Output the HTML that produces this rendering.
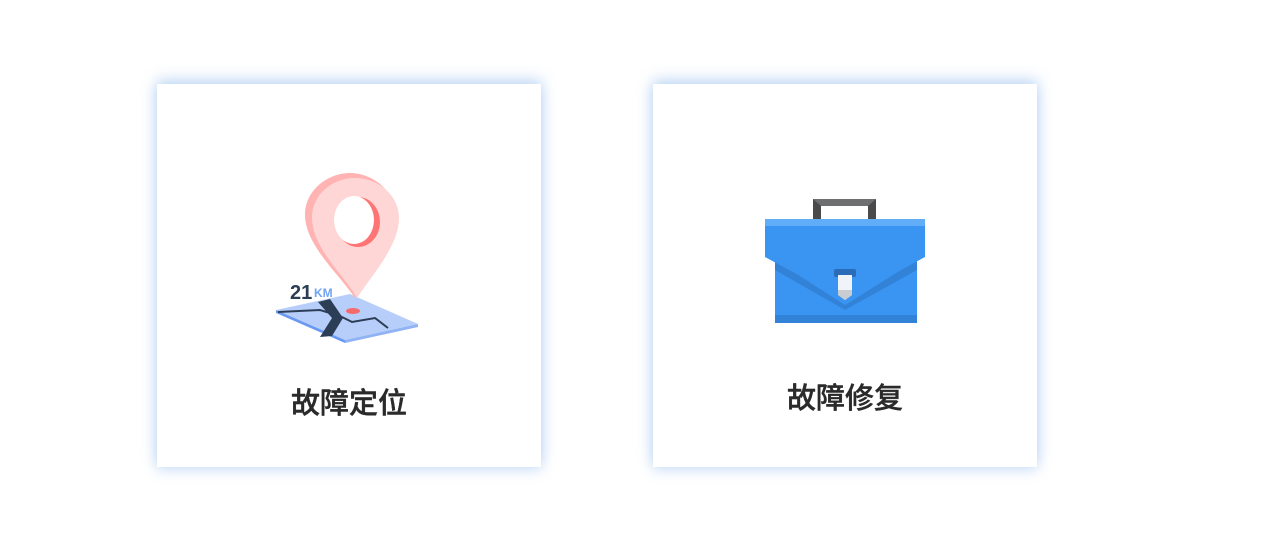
<!DOCTYPE html>
<html><head><meta charset="utf-8"><style>
body{margin:0;width:1268px;height:558px;background:#fff;position:relative;overflow:hidden;font-family:"Liberation Sans","Noto Sans CJK SC",sans-serif}
.card{position:absolute;top:84px;width:384px;height:383px;background:#fff;box-shadow:0 -4px 14px rgba(120,170,235,.45),0 4px 12px rgba(150,190,240,.3)}
.t{position:absolute;left:0;width:100%;text-align:center;font-size:29px;font-weight:500;color:#2a2a2a;-webkit-text-stroke:0.4px #2a2a2a}
svg{position:absolute;left:0;top:0}
</style></head><body>
<div class="card" style="left:157px">
<svg width="384" height="383" viewBox="157 84 384 383">
<polygon points="276,310 350,294 418,324 345,340" fill="#b8cefa"/>
<polygon points="276,310 345,340 345,343 276,313" fill="#6a9af0"/>
<polygon points="345,340 418,324 418,327 345,343" fill="#8fb3f5"/>
<polyline points="278,312 320,310 340,316 352,322 375,318 388,328" fill="none" stroke="#2c3e55" stroke-width="2"/>
<polygon points="318,302 330,299 343,318 332,336 320,337 332,318" fill="#2c3e55"/>
<ellipse cx="353" cy="311" rx="7" ry="3" fill="#f46b6b"/>
<path d="M350,173 C328,173 305,190 305,215 C305,245 340,275 355,298 C370,275 395,245 395,215 C395,190 372,173 350,173Z" fill="#ffb3b3"/>
<path d="M355,178 C333,178 312,194 312,218 C312,248 345,276 357,298 C372,275 399,246 399,218 C399,194 377,178 355,178Z" fill="#ffd6d6"/>
<ellipse cx="358" cy="222" rx="22" ry="25" fill="#ff7474"/>
<ellipse cx="354" cy="220" rx="20" ry="24" fill="#fff"/>
<text x="290" y="299" font-family="Liberation Sans" font-weight="bold" font-size="20" fill="#2c3e55">21</text>
<text x="314" y="297" font-family="Liberation Sans" font-weight="bold" font-size="12" fill="#6fa3f5">KM</text>
</svg>
<div class="t" style="top:296px">故障定位</div>
</div>
<div class="card" style="left:653px">
<svg width="384" height="383" viewBox="653 84 384 383">
<polygon points="813,199 876,199 876,220 868,220 868,206 821,206 821,220 813,220" fill="#4a4a4a"/>
<polygon points="813,199 876,199 868,206 821,206" fill="#6d6f70"/>
<rect x="775" y="250" width="142" height="73" fill="#3a95f2"/>
<rect x="775" y="315" width="142" height="8" fill="#3283d8"/>
<polygon points="775,260 845,305 917,260 917,270 845,310 775,270" fill="#3283d8"/>
<polygon points="765,219 925,219 925,257 845,300 765,257" fill="#3a95f2"/>
<rect x="765" y="219" width="160" height="7" fill="#62adf7"/>
<rect x="834" y="269" width="22" height="8" rx="2" fill="#2b6cb8"/>
<polygon points="838,275 852,275 852,295 845,300 838,295" fill="#f0f3f7"/>
<polygon points="838,290 852,290 852,295 845,300 838,295" fill="#c9ccd0"/>
</svg>
<div class="t" style="top:291px">故障修复</div>
</div>
</body></html>
